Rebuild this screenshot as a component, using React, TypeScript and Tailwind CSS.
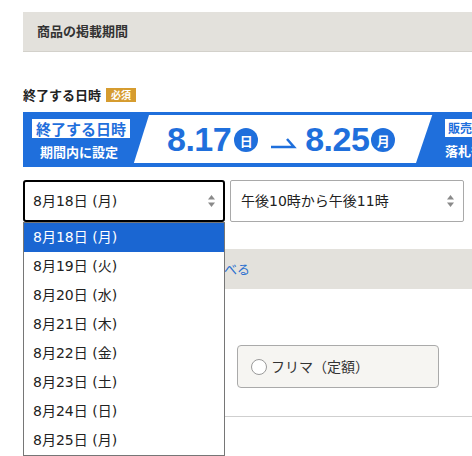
import React from 'react';

const jp = { fontFamily: '"Noto Sans CJK JP", "Noto Sans", sans-serif' };
const opt = { fontFamily: '"DejaVu Sans", "Noto Sans CJK JP", sans-serif' };
const num = { fontFamily: '"Liberation Sans", Arial, sans-serif' };

const options = [
  '8月18日 (月)',
  '8月19日 (火)',
  '8月20日 (水)',
  '8月21日 (木)',
  '8月22日 (金)',
  '8月23日 (土)',
  '8月24日 (日)',
  '8月25日 (月)',
];

const Arrows: React.FC = () => (
  <svg width="9" height="14" viewBox="0 0 9 14" className="shrink-0">
    <path d="M4.5 1 L8 5.5 L1 5.5 Z" fill="#8a8a8a" />
    <path d="M4.5 13 L8 8.5 L1 8.5 Z" fill="#8a8a8a" />
  </svg>
);

const DayCircle: React.FC<{ label: string }> = ({ label }) => (
  <span className="w-[24px] h-[24px] rounded-full bg-[#1f6fdc] text-white text-[13px] font-bold flex items-center justify-center leading-none" style={jp}>
    {label}
  </span>
);

export default function App() {
  return (
    <div className="w-[472px] h-[456px] overflow-hidden bg-white text-[#333]" style={jp}>
      <div className="pl-[23px] pt-[12px]">
        <div className="h-[40px] bg-[#e3e1dc] border-b border-[#d3d1cb] flex items-center pl-[14px] pb-[2px] text-[13px] font-bold text-[#333]">
          商品の掲載期間
        </div>

        <div className="mt-[35px] flex items-center gap-[5px] h-[16px]">
          <span className="text-[13px] font-bold text-[#222]">終了する日時</span>
          <span className="bg-[#d69c2f] text-white text-[10px] font-bold leading-none px-[5px] py-[2px]">必須</span>
        </div>

        <div className="mt-[9px] relative h-[55px] border-t-[3px] border-b-[4px] border-[#1f6fdc] bg-white flex items-center">
          <div className="absolute left-0 top-0 bottom-0 w-[126px] bg-[#1f6fdc] [clip-path:polygon(0_0,100%_0,88%_100%,0_100%)]" />
          <div className="relative w-[126px] h-full flex flex-col items-start pl-[9px] pt-[4px]">
            <span className="bg-white text-[#1f6fdc] text-[15px] font-bold leading-none px-[4px] py-[2px]">終了する日時</span>
            <span className="text-white text-[13px] font-bold leading-none mt-[7px] ml-[8px]">期間内に設定</span>
          </div>
          <div className="relative flex items-center ml-[18px]">
            <span className="text-[34px] font-bold text-[#1f6fdc] leading-none tracking-[-0.5px]" style={num}>8.17</span>
            <span className="ml-[3px] mt-[2px]"><DayCircle label="日" /></span>
            <svg width="28" height="14" viewBox="0 0 28 14" className="ml-[12px] mt-[8px]">
              <polyline points="1,11 24,11 17,3" fill="none" stroke="#1f6fdc" strokeWidth="2.5" />
            </svg>
            <span className="ml-[7px] text-[34px] font-bold text-[#1f6fdc] leading-none tracking-[-0.5px]" style={num}>8.25</span>
            <span className="ml-[2px] mt-[2px]"><DayCircle label="月" /></span>
          </div>
          <div className="absolute right-0 top-0 bottom-0 w-[56px] bg-[#1f6fdc] [clip-path:polygon(29%_0,100%_0,100%_100%,0_100%)]" />
          <div className="absolute left-[422px] top-0 bottom-0 w-[50px] overflow-hidden flex flex-col items-start pt-[4px]">
            <span className="bg-white text-[#1f6fdc] text-[12px] font-bold leading-none px-[3px] py-[3px] whitespace-nowrap">販売形式</span>
            <span className="text-white text-[13px] font-bold leading-none mt-[7px] whitespace-nowrap">落札後</span>
          </div>
        </div>

        <div className="relative mt-[13px]">
          <div className="flex gap-[5px]">
            <div className="w-[202px] h-[42px] border-2 border-black rounded-[3px] flex items-center justify-between pl-[8px] pr-[7px] text-[14px] text-[#222]" style={opt}>
              <span>8月18日 (月)</span>
              <Arrows />
            </div>
            <div className="w-[234px] h-[42px] border border-[#a9a9a9] rounded-[2px] flex items-center justify-between pl-[10px] pr-[8px] text-[14px] text-[#222]" style={opt}>
              <span>午後10時から午後11時</span>
              <Arrows />
            </div>
          </div>

          <div className="mt-[27px] h-[40px] bg-[#e3e1dc] flex items-center">
            <span className="w-[227px] text-right text-[13px] text-[#2a6fcf]">相場を調べる</span>
          </div>

          <div className="mt-[56px] h-[43px] flex gap-[12px]">
            <div className="w-[202px] h-[43px] border border-[#aaa] rounded-[4px] bg-[#f6f5f2]" />
            <div className="w-[202px] h-[43px] border border-[#aaa] rounded-[4px] bg-[#f6f5f2] flex items-center pl-[13px] gap-[4px] text-[14px] text-[#333]">
              <span className="w-[16px] h-[16px] rounded-full border border-[#9a9a9a] bg-white" />
              <span>フリマ（定額）</span>
            </div>
          </div>
          <div className="mt-[28px] border-t border-[#cfcfcf]" />

          <div className="absolute left-0 top-[42px] w-[202px] border border-[#767676] bg-white">
            {options.map((o, i) => (
              <div
                key={o}
                className={`h-[29px] flex items-center pl-[9px] text-[14px] ${i === 0 ? 'bg-[#1a66d2] text-white' : 'text-[#222]'}`}
                style={opt}
              >
                {o}
              </div>
            ))}
          </div>
        </div>
      </div>
    </div>
  );
}
